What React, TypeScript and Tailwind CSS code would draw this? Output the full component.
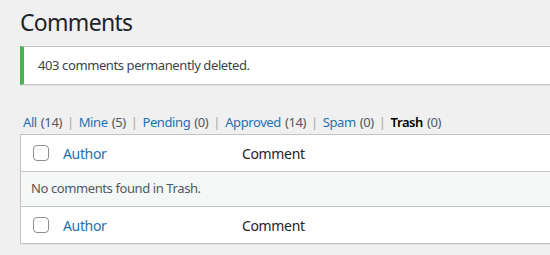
export default function App() {
  const filters = [
    { label: 'All', count: 14 },
    { label: 'Mine', count: 5 },
    { label: 'Pending', count: 0 },
    { label: 'Approved', count: 14 },
    { label: 'Spam', count: 0 },
    { label: 'Trash', count: 0, current: true },
  ];

  const font = { fontFamily: '"Segoe UI", "Noto Sans", "Open Sans", sans-serif' };

  const headRow = (
    <div className="flex items-center h-[36px] bg-white">
      <span className="ml-[12px] w-[16px] h-[16px] rounded-[4px] border border-[#8c8f94] bg-white" />
      <a className="ml-[14px] w-[179px] text-[14px] tracking-[-0.35px] text-[#2271b1]">Author</a>
      <span className="text-[14px] tracking-[-0.35px] text-[#1d2327]">Comment</span>
    </div>
  );

  return (
    <div className="w-[550px] h-[255px] overflow-hidden bg-[#f0f0f1]" style={font}>
      <div className="w-[600px] pl-[20px]">
        <h1 className="pt-[8px] text-[23px] leading-[29px] font-normal tracking-[-0.7px] text-[#1d2327]">Comments</h1>

        {/* notice */}
        <div className="mt-[9px] h-[39px] flex items-center bg-white border border-[#c3c4c7] border-l-[4px] border-l-[#46b450] shadow-[0_1px_1px_rgba(0,0,0,0.04)]">
          <p className="ml-[14px] text-[13px] tracking-[-0.4px] text-[#3c434a]">403 comments permanently deleted.</p>
        </div>

        {/* filters */}
        <ul className="mt-[27px] ml-[3px] flex items-center text-[13px] leading-[20px] tracking-[-0.4px] text-[#646970]">
          {filters.map((f, i) => (
            <li key={f.label} className="flex items-center">
              <a className={f.current ? 'font-semibold text-black' : 'text-[#2271b1]'}>
                {f.label}
                <span className="ml-[4px] font-normal text-[#50575e]">({f.count})</span>
              </a>
              {i < filters.length - 1 && <span className="px-[5px] text-[#a7aaad]">|</span>}
            </li>
          ))}
        </ul>

        {/* table */}
        <div className="mt-[2px] border border-[#c3c4c7] shadow-[0_1px_1px_rgba(0,0,0,0.04)]">
          {headRow}
          <div className="h-[36px] flex items-center bg-[#f6f7f7] border-y border-[#c3c4c7]">
            <span className="ml-[10px] text-[13px] tracking-[-0.4px] text-[#50575e]">No comments found in Trash.</span>
          </div>
          {headRow}
        </div>
      </div>
    </div>
  );
}
